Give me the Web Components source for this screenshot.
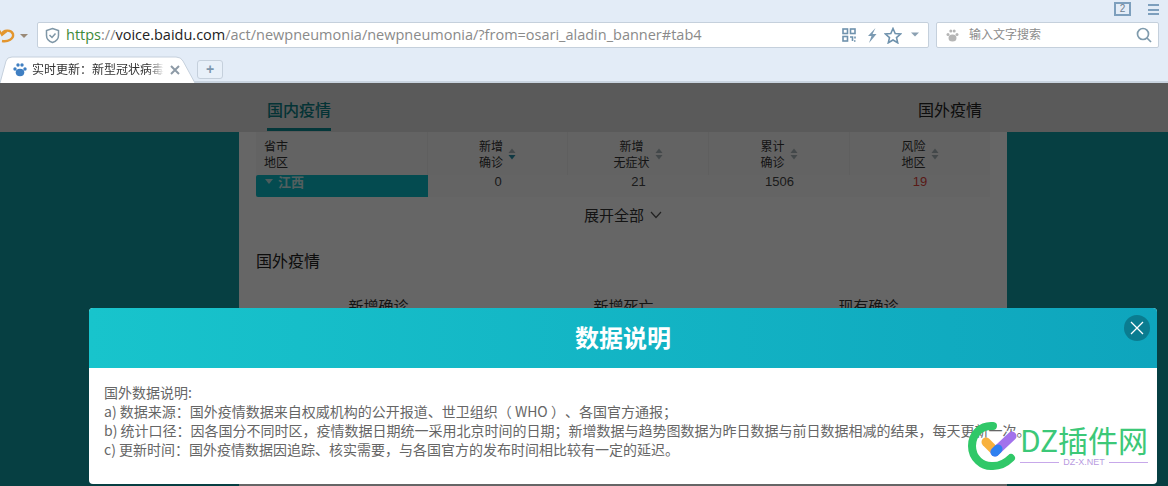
<!DOCTYPE html>
<html lang="zh">
<head>
<meta charset="utf-8">
<title>数据说明</title>
<style>
    html, body { margin: 0; height: 100%; overflow: hidden; }
    body { font-family: "Liberation Sans", "Noto Sans CJK SC", sans-serif; background: #e3ecf7; }
</style>
</head>
<body>
<browser-chrome></browser-chrome>
<epidemic-page>
    <modal-dialog heading="数据说明">
        <p>国外数据说明:</p>
        <p>a) 数据来源：国外疫情数据来自权威机构的公开报道、世卫组织（&nbsp;WHO&nbsp;）、各国官方通报；</p>
        <p>b) 统计口径：因各国分不同时区，疫情数据日期统一采用北京时间的日期；新增数据与趋势图数据为昨日数据与前日数据相减的结果，每天更新一次。</p>
        <p>c) 更新时间：国外疫情数据因追踪、核实需要，与各国官方的发布时间相比较有一定的延迟。</p>
    </modal-dialog>
    <dz-watermark></dz-watermark>
</epidemic-page>

<script>
class BrowserChrome extends HTMLElement {
    connectedCallback() {
        this.attachShadow({ mode: 'open' });
        this.shadowRoot.innerHTML = `
            <style>
                :host { display: block; height: 83px; box-sizing: border-box; background: #e3ecf7; overflow: hidden; }
                .title-row { height: 22px; display: flex; justify-content: flex-end; align-items: flex-start; gap: 17px; padding: 1px 9px 0 0; box-sizing: border-box; }
                .win-count { width: 13px; height: 10px; border: 2px solid #7d9fbd; font: 10px "Liberation Sans", sans-serif; color: #6d7f8f; text-align: center; line-height: 10px; margin-top: 1px; }
                .menu { width: 11px; height: 7px; margin-top: 3px; border-top: 2px solid #7d9fbd; border-bottom: 2px solid #7d9fbd; position: relative; }
                .menu::after { content: ""; position: absolute; left: 0; right: 0; top: 2.5px; height: 2px; background: #7d9fbd; }
                .nav-row { height: 26px; display: flex; gap: 7px; padding-right: 9px; }
                .back { width: 30px; flex: none; display: flex; align-items: center; overflow: hidden; }
                .box { height: 26px; box-sizing: border-box; background: #fff; border: 1px solid #c5d0dc; border-radius: 2px; display: flex; align-items: center; }
                .address { flex: 1; padding: 0 5px 0 6px; }
                .url { flex: 1; margin-left: 5px; padding-bottom: 2px; font: 14.5px "Open Sans", sans-serif; white-space: nowrap; color: #8a8a8a; }
                .url b { font-weight: 400; color: #3e8a3a; }
                .url i { font-style: normal; color: #222; }
                .search { width: 223px; flex: none; padding: 0 6px 0 9px; font: 12px "Noto Sans CJK SC", sans-serif; color: #8c8c8c; }
                .search span { flex: 1; margin-left: 10px; padding-bottom: 3px; }
                .tools { display: flex; align-items: center; gap: 5px; }
                .qr { margin-right: 4px; }
                .tab-row { height: 35px; display: flex; align-items: flex-end; border-bottom: 2px solid #c9d4e0; box-sizing: border-box; }
                .tab { position: relative; width: 196px; height: 27px; margin-bottom: -2px; box-sizing: border-box; display: flex; align-items: center; padding: 0 0 0 13px; font: 12px "Noto Sans CJK SC", sans-serif; color: #333; }
                .tab-shape { position: absolute; left: 0; top: 0; }
                .tab > svg:not(.tab-shape), .tab span { position: relative; }
                .tab span { width: 132px; margin-left: 5px; padding-bottom: 3px; overflow: hidden; white-space: nowrap; -webkit-mask-image: linear-gradient(90deg, #000 88%, transparent); mask-image: linear-gradient(90deg, #000 88%, transparent); }
                .new { width: 26px; height: 19px; margin: 0 0 2px 1px; box-sizing: border-box; border: 1px solid #c5d0dc; border-radius: 3px; background: #e8f0f9; color: #7c96ad; font: 700 14px/16px "Liberation Sans", sans-serif; text-align: center; }
            </style>
            <div class="title-row"><div class="win-count">2</div><div class="menu"></div></div>
            <div class="nav-row">
                <div class="back">
                    <svg width="30" height="26" viewBox="0 0 30 26" fill="none"><path d="M-1 8 L2 13 L7 9" stroke="#e3962e" stroke-width="2"/><path d="M2 12 C3 8 11 7 13 12 C14 17 8 20 2 19" stroke="#e3962e" stroke-width="2.4"/><path d="M20 12 h8 l-4 4z" fill="#9a8a78"/></svg>
                </div>
                <div class="box address">
                    <svg width="17" height="17" viewBox="0 0 17 17" fill="none"><path d="M8.5 1.5 L14.5 3.5 V8.5 C14.5 12 11.5 14.5 8.5 15.5 C5.5 14.5 2.5 12 2.5 8.5 V3.5 Z" stroke="#7f97a7" stroke-width="1.5"/><path d="M5.5 8 L8 10.5 L11.5 6.5" stroke="#7f97a7" stroke-width="1.5"/></svg>
                    <div class="url"><b>https</b>://<i>voice.baidu.com</i>/act/newpneumonia/newpneumonia/?from=osari_aladin_banner#tab4</div>
                    <div class="tools">
                        <svg class="qr" width="14" height="14" viewBox="0 0 14 14" fill="none" stroke="#6f92ad" stroke-width="1.6"><rect x="1" y="1" width="4.5" height="4.5"/><rect x="8.5" y="1" width="4.5" height="4.5"/><rect x="1" y="8.5" width="4.5" height="4.5"/><path d="M8 9h2.5v4M13 8.5v2M12 13h1.5" /></svg>
                        <svg width="14" height="17" viewBox="0 0 14 17" fill="#7b9ab2"><path d="M10.5 1 L3 9 H6.5 L4 16 L11.500 7 H7.5 Z"/></svg>
                        <svg width="18" height="17" viewBox="0 0 18 17" fill="none" stroke="#6f92ad" stroke-width="1.6"><path d="M9 1.5 L11.2 6.5 L16.6 7 L12.5 10.6 L13.7 15.8 L9 13 L4.3 15.8 L5.5 10.6 L1.4 7 L6.8 6.5 Z"/></svg>
                        <svg width="16" height="8" viewBox="0 0 16 8"><path d="M4 1.500 h8 l-4 4z" fill="#8ba0b2"/></svg>
                    </div>
                </div>
                <div class="box search">
                    <svg width="13" height="14" viewBox="0 0 13 14" fill="#b5b5b5"><ellipse cx="6.500" cy="10" rx="4" ry="3.500"/><circle cx="2" cy="6.500" r="1.500"/><circle cx="4.800" cy="3" r="1.500"/><circle cx="8.200" cy="3" r="1.500"/><circle cx="11" cy="6.500" r="1.500"/></svg>
                    <span>输入文字搜索</span>
                    <svg width="16" height="16" viewBox="0 0 16 16" fill="none" stroke="#7f9bad" stroke-width="1.700"><circle cx="7" cy="7" r="5.500"/><path d="M11 11 L15 15"/></svg>
                </div>
            </div>
            <div class="tab-row">
                <div class="tab">
                    <svg class="tab-shape" width="196" height="27" viewBox="0 0 196 27"><path d="M0 27 L6 5 Q7 1 12 1 H176 Q181 1 183 5 L195 27" fill="#fff" stroke="#c5d0dc"/></svg>
                    <svg width="14" height="15" viewBox="0 0 14 15" fill="#3f7fc2" style="flex:none"><ellipse cx="7" cy="10.500" rx="4.300" ry="3.700"/><circle cx="2" cy="7" r="1.700"/><circle cx="5" cy="3" r="1.700"/><circle cx="9" cy="3" r="1.700"/><circle cx="12" cy="7" r="1.700"/></svg>
                    <span>实时更新：新型冠状病毒肺炎</span>
                    <svg width="10" height="10" viewBox="0 0 10 10" stroke="#8d9aa6" stroke-width="2" style="margin-left:6px;flex:none"><path d="M1 1 L9 9 M9 1 L1 9"/></svg>
                </div>
                <div class="new">+</div>
            </div>
        `;
    }
}

class EpidemicPage extends HTMLElement {
    connectedCallback() {
        this.attachShadow({ mode: 'open' });
        this.shadowRoot.innerHTML = `
            <style>
                :host { display: block; position: relative; height: 403px; overflow: hidden; font-family: "Noto Sans CJK SC", sans-serif; }
                .dim { position: absolute; inset: 0; background: rgba(0, 0, 0, .6); }
                .bar { height: 49px; background: #e0e0e0; padding-left: 239px; }
                .bar-inner { width: 768px; box-sizing: border-box; padding: 0 25px 0 28px; display: flex; justify-content: space-between; font-size: 16px; color: #222; }
                .bar-inner div { height: 45px; line-height: 53px; }
                .bar-inner .on { font-weight: 500; color: #0a7f86; border-bottom: 3px solid #0a8a92; }
                .stage { height: 354px; background: #0f9ea5; padding-left: 239px; }
                .sheet { width: 768px; height: 100%; background: #fff; box-sizing: border-box; padding: 0 17px; }
                .more { margin-top: 8px; font-size: 15px; line-height: 20px; color: #333; display: flex; justify-content: center; align-items: center; gap: 6px; }
                h2 { margin: 23px 0 0; font-size: 16px; line-height: 24px; font-weight: 400; color: #222; }
                .stats { display: grid; grid-template-columns: repeat(3, 245px); margin: 24px 0 0; font-size: 15px; line-height: 20px; color: #333; text-align: center; }
            </style>
            <div class="bar"><div class="bar-inner"><div class="on">国内疫情</div><div>国外疫情</div></div></div>
            <div class="stage">
                <div class="sheet">
                    <province-table></province-table>
                    <div class="more">展开全部
                        <svg width="12" height="8" viewBox="0 0 12 8" fill="none" stroke="#555" stroke-width="1.200"><path d="M1 1 L6 6.500 L11 1"/></svg>
                    </div>
                    <h2>国外疫情</h2>
                    <div class="stats"><div>新增确诊</div><div>新增死亡</div><div>现有确诊</div></div>
                </div>
            </div>
            <div class="dim"></div>
            <slot></slot>
        `;
    }
}

class ProvinceTable extends HTMLElement {
    connectedCallback() {
        const sort = `<svg width="8" height="12" viewBox="0 0 8 12"><path d="M4 0.500 L7.500 5 H0.500 Z" fill="#a9b4b8"/><path d="M4 11.500 L7.500 7 H0.500 Z" fill="#a9b4b8"/></svg>`;
        const sortOn = `<svg width="8" height="12" viewBox="0 0 8 12"><path d="M4 0.500 L7.500 5 H0.500 Z" fill="#a9b4b8"/><path d="M4 11.500 L7.500 7 H0.500 Z" fill="#2a8fa8"/></svg>`;
        this.attachShadow({ mode: 'open' });
        this.shadowRoot.innerHTML = `
            <style>
                :host { display: grid; grid-template-columns: 172px 140px 141px 141px 140px; font-size: 12px; line-height: 16px; color: #333; background: #f7f7f7; }
                .head { height: 43px; display: flex; align-items: center; justify-content: center; gap: 5px; border-right: 1px solid #eee; box-sizing: border-box; text-align: center; }
                .head.region { justify-content: flex-start; padding-left: 8px; text-align: left; }
                .head.last { border-right: 0; }
                .cell { height: 22px; line-height: 14px; font-size: 13px; text-align: center; font-family: "Liberation Sans", sans-serif; color: #444; background: #fafafa; }
                .area { background: #0bbcc8; color: #cfeeee; font: 700 13px/14px "Noto Sans CJK SC", sans-serif; text-align: left; padding-left: 9px; display: flex; gap: 5px; border-radius: 2px 0 0 2px; }
                .area svg { margin-top: 3px; }
                .risk { color: #e0433b; }
            </style>
            <div class="head region"><span>省市<br>地区</span></div>
            <div class="head"><span>新增<br>确诊</span>${sortOn}</div>
            <div class="head"><span>新增<br>无症状</span>${sort}</div>
            <div class="head"><span>累计<br>确诊</span>${sort}</div>
            <div class="head last"><span>风险<br>地区</span>${sort}</div>
            <div class="cell area"><svg width="8" height="7" viewBox="0 0 8 7"><path d="M0 1 H8 L4 6 Z" fill="#bfe6e8"/></svg>江西</div>
            <div class="cell">0</div>
            <div class="cell">21</div>
            <div class="cell">1506</div>
            <div class="cell risk">19</div>
        `;
    }
}

class ModalDialog extends HTMLElement {
    connectedCallback() {
        this.attachShadow({ mode: 'open' });
        this.shadowRoot.innerHTML = `
            <style>
                :host { position: absolute; left: 89px; top: 225px; width: 1068px; height: 176px; display: block; background: #fff; border-radius: 4px; overflow: hidden; font-family: "Noto Sans CJK SC", sans-serif; }
                header { position: relative; height: 60px; background: linear-gradient(90deg, #18c4cc, #0ea5bd); color: #fff; font-size: 24px; font-weight: 700; line-height: 58px; text-align: center; }
                button { position: absolute; right: 7px; top: 7px; width: 26px; height: 26px; padding: 0; border: 0; border-radius: 50%; background: #0a7c90; display: flex; align-items: center; justify-content: center; }
                .body { padding: 15px; font-size: 14px; line-height: 19px; color: #666; text-spacing-trim: space-all; }
                ::slotted(p) { margin: 0; white-space: nowrap; }
            </style>
            <header>${this.getAttribute('heading')}
                <button aria-label="关闭"><svg width="14" height="14" viewBox="0 0 14 14" stroke="#fff" stroke-width="1.300"><path d="M1 1 L13 13 M13 1 L1 13"/></svg></button>
            </header>
            <div class="body"><slot></slot></div>
        `;
    }
}

class DzWatermark extends HTMLElement {
    connectedCallback() {
        this.attachShadow({ mode: 'open' });
        this.shadowRoot.innerHTML = `
            <style>
                :host { position: absolute; left: 968px; top: 338px; width: 182px; height: 52px; display: flex; gap: 3px; font-family: "Noto Sans CJK SC", sans-serif; }
                svg { flex: none; }
                .name { font-size: 30px; line-height: 34px; color: #3cc878; margin-top: 1px; white-space: nowrap; }
                .sub { display: flex; align-items: center; gap: 4px; margin-top: 1px; font: 9px/11px "Liberation Sans", sans-serif; color: #b89ae0; }
                .sub i { flex: 1; height: 1px; background: #c7a8ea; }
            </style>
            <svg width="49" height="50" viewBox="0 0 49 50" fill="none">
                <path d="M25 5 C13 4 4 13 4 25 C4 37 14 46 25 45 C32 45 38 42 43 37" stroke="#30c868" stroke-width="8" stroke-linecap="round"/>
                <path d="M18 21 L25 28" stroke="#f8b13c" stroke-width="9" stroke-linecap="round"/>
                <path d="M27 31 L44 15" stroke="#a272ec" stroke-width="9" stroke-linecap="round"/>
                <path d="M27 31 L30 28" stroke="#2f80f0" stroke-width="9" stroke-linecap="round"/>
            </svg>
            <div>
                <div class="name">DZ插件网</div>
                <div class="sub"><i></i>DZ-X.NET<i></i></div>
            </div>
        `;
    }
}

customElements.define('browser-chrome', BrowserChrome);
customElements.define('epidemic-page', EpidemicPage);
customElements.define('province-table', ProvinceTable);
customElements.define('modal-dialog', ModalDialog);
customElements.define('dz-watermark', DzWatermark);
</script>
</body>
</html>
